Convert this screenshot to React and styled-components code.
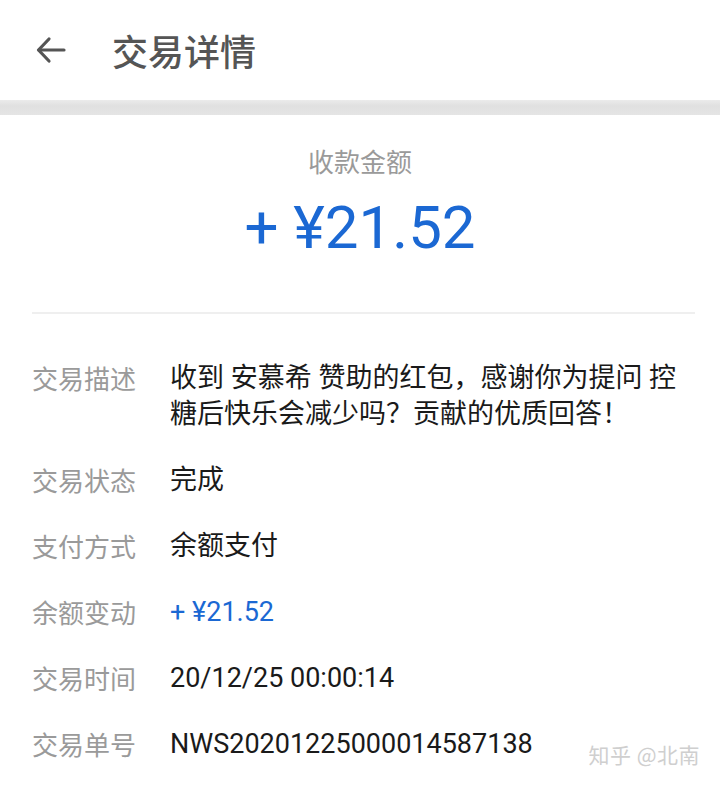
import React from "react";
import styled, { createGlobalStyle } from "styled-components";

const Global = createGlobalStyle`
  html, body { margin: 0; padding: 0; background: #fff; }
  body { font-family: Roboto, "Noto Sans CJK SC", "Noto Sans", sans-serif; }
`;

const Page = styled.div`
  position: relative;
  width: 720px;
  height: 787px;
  background: #fff;
  overflow: hidden;
`;

const Header = styled.header`
  height: 100px;
  display: flex;
  align-items: center;
  padding-left: 35px;
  box-sizing: border-box;
`;

const BackIcon = styled.svg`
  width: 32px;
  height: 32px;
  flex-shrink: 0;
`;

const Title = styled.h1`
  margin: 0 0 0 45px;
  font-size: 36px;
  font-weight: 500;
  color: #555;
  font-family: "Noto Sans CJK SC", sans-serif;
  line-height: 1;
`;

const Band = styled.div`
  height: 15px;
  background: linear-gradient(#ebebeb, #e0e0e0 40%, #e5e5e5);
`;

const Summary = styled.section`
  padding: 28px 0 46px;
  text-align: center;
`;

const SummaryLabel = styled.div`
  font-size: 26px;
  line-height: 36px;
  color: #9a9a9a;
  font-family: "Noto Sans CJK SC", sans-serif;
`;

const Amount = styled.div`
  margin-top: 11px;
  font-size: 60px;
  line-height: 76px;
  color: #1b68d3;
  font-family: Roboto, sans-serif;
`;

const Divider = styled.hr`
  margin: 0 25px 0 32px;
  border: 0;
  height: 2px;
  background: #efefef;
`;

const List = styled.dl`
  margin: 0;
  padding: 46px 24px 0 32px;
  display: flex;
  flex-direction: column;
  gap: 30px;
`;

const Row = styled.div`
  display: grid;
  grid-template-columns: 138px 1fr;
  line-height: 36px;
`;

const Label = styled.dt`
  margin: 0;
  font-size: 26px;
  color: #9a9a9a;
  font-family: "Noto Sans CJK SC", sans-serif;
`;

const Value = styled.dd`
  margin: 0;
  font-size: 27px;
  color: ${(p) => (p.$accent ? "#1b68d3" : "#1a1a1a")};
  font-family: Roboto, "Noto Sans CJK SC", sans-serif;
`;

const Watermark = styled.div`
  position: absolute;
  right: 20px;
  bottom: 18px;
  font-size: 21px;
  color: #cfcfcf;
  font-family: "Noto Sans CJK SC", sans-serif;
  letter-spacing: 0.5px;
`;

const rows = [
  ["交易描述", "收到 安慕希 赞助的红包，感谢你为提问 控糖后快乐会减少吗？贡献的优质回答！"],
  ["交易状态", "完成"],
  ["支付方式", "余额支付"],
  ["余额变动", "+ ¥21.52", true],
  ["交易时间", "20/12/25 00:00:14"],
  ["交易单号", "NWS20201225000014587138"],
];

export default function App() {
  return (
    <Page>
      <Global />
      <Header>
        <BackIcon viewBox="0 0 32 32" fill="none" stroke="#555" strokeWidth="3.2" strokeLinecap="round" strokeLinejoin="round">
          <path d="M29 16H4" />
          <path d="M14 5L3.5 16L14 27" />
        </BackIcon>
        <Title>交易详情</Title>
      </Header>
      <Band />
      <Summary>
        <SummaryLabel>收款金额</SummaryLabel>
        <Amount>+ ¥21.52</Amount>
      </Summary>
      <Divider />
      <List>
        {rows.map(([k, v, accent]) => (
          <Row key={k}>
            <Label>{k}</Label>
            <Value $accent={accent}>{v}</Value>
          </Row>
        ))}
      </List>
      <Watermark>知乎 @北南</Watermark>
    </Page>
  );
}
